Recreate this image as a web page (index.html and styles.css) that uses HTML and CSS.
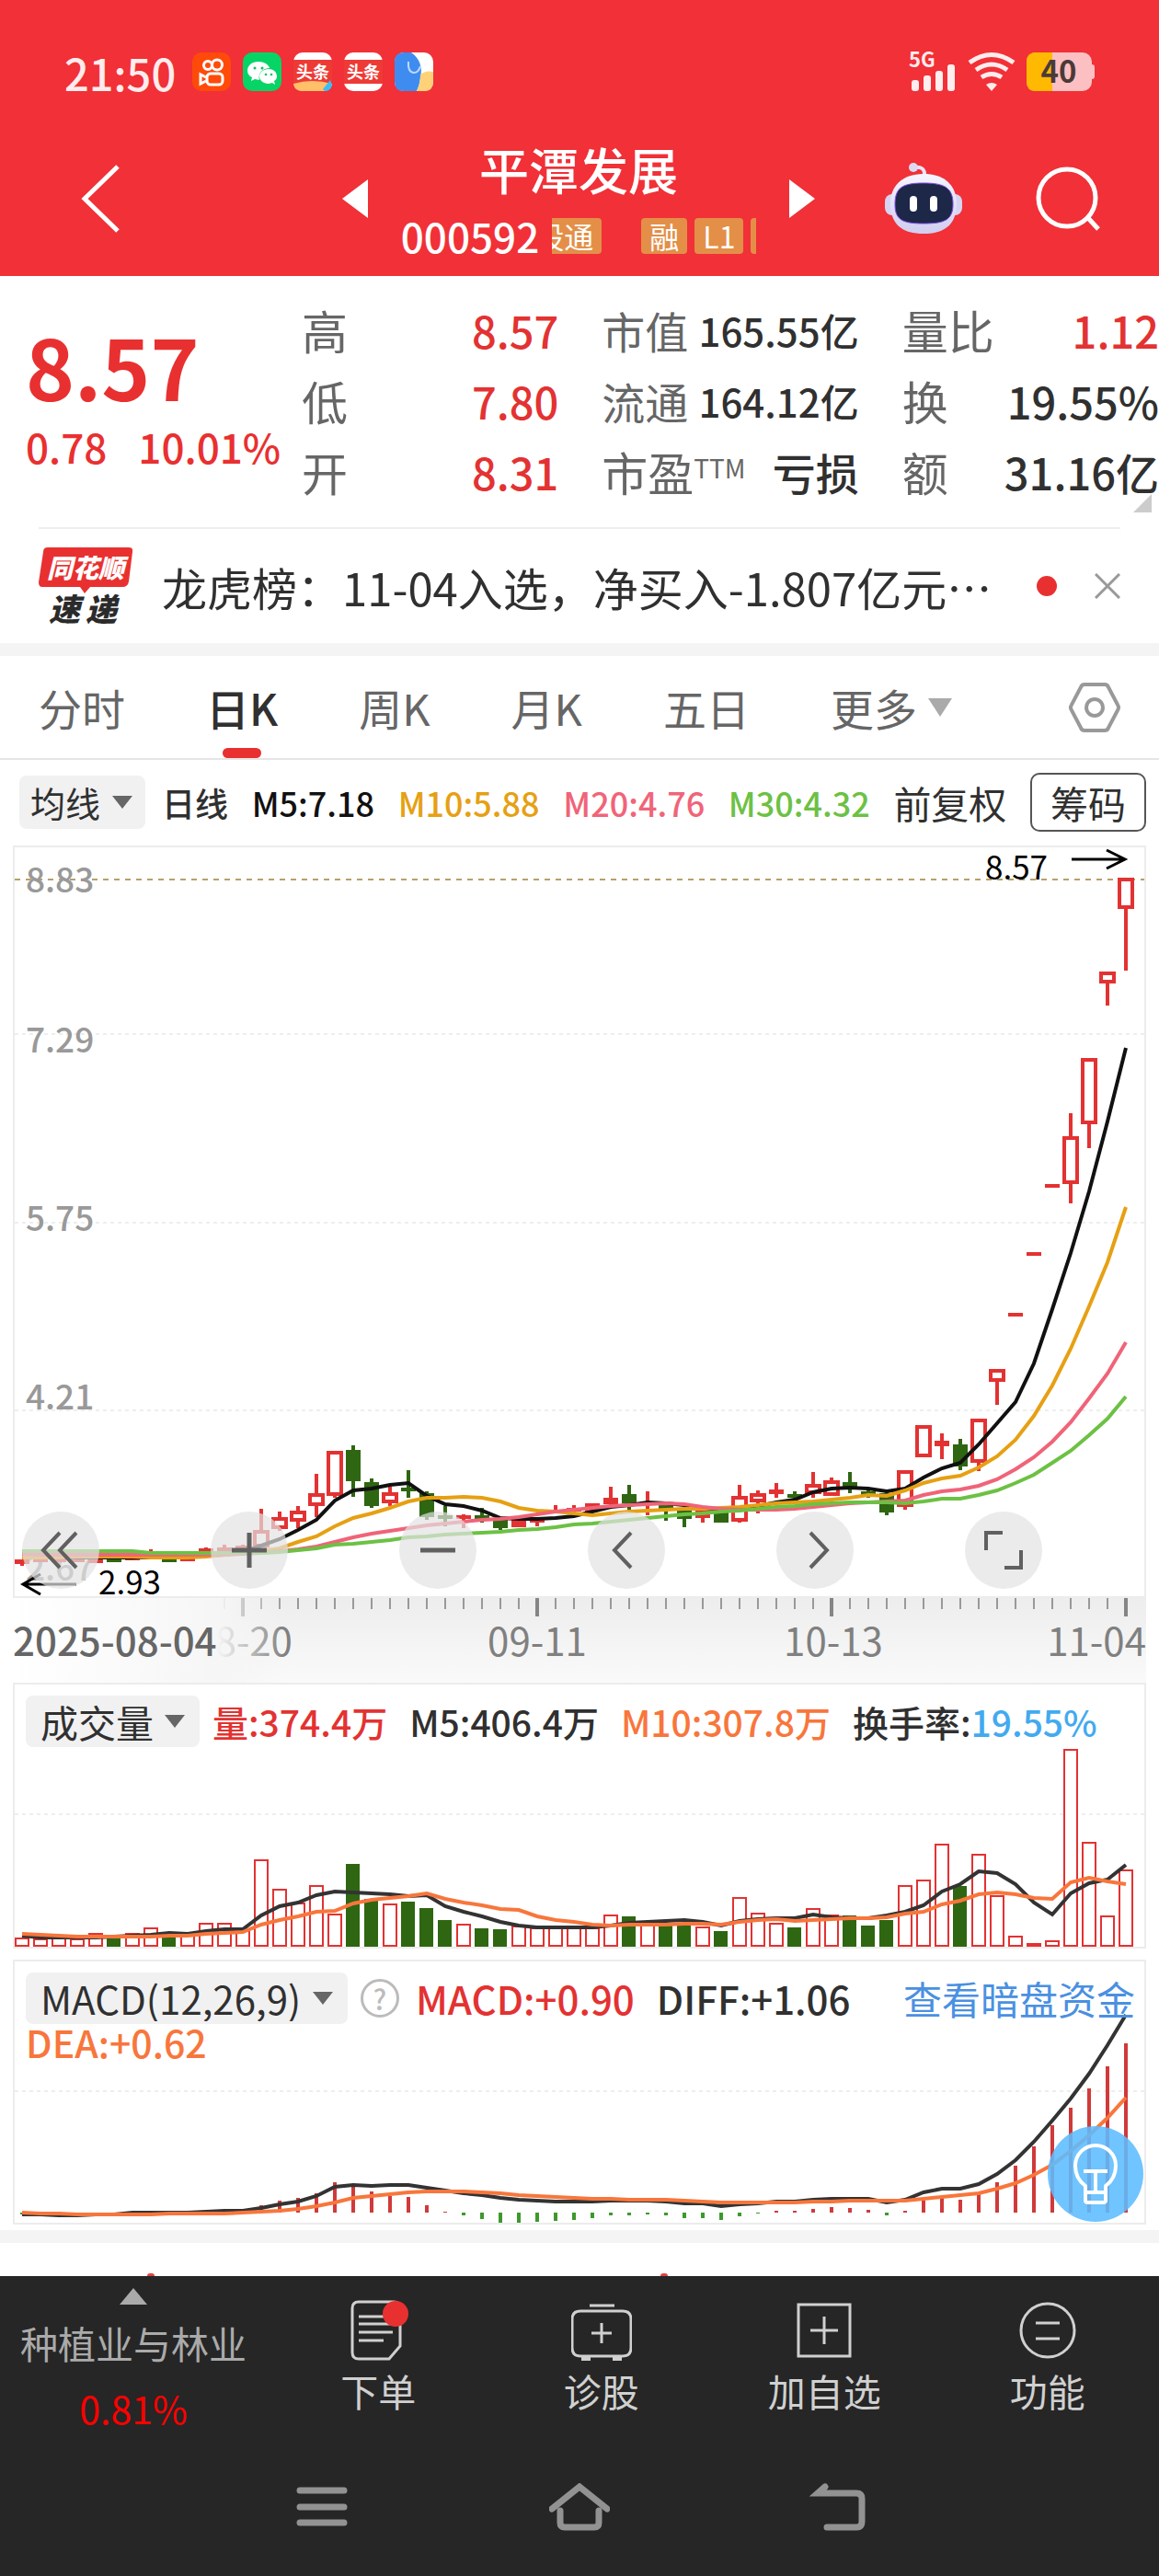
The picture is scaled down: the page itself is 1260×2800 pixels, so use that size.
FILE: index.html
```html
<!DOCTYPE html>
<html lang="zh-CN">
<head>
  <meta charset="UTF-8">
  <meta name="viewport" content="width=device-width, initial-scale=1.0">
  <title>平潭发展 000592</title>
  <link rel="stylesheet" href="styles.css">
</head>
<body>
<div class="page">
  <!-- 顶部 -->
  <header class="header">
    <div class="status">
      <span class="clock">21:50</span>
      <div class="apps">
        <svg viewBox="0 0 42 42" class="app">
          <rect width="42" height="42" rx="10" fill="#ff4a0a"/>
          <g fill="none" stroke="#fff" stroke-width="3">
            <circle cx="17" cy="14" r="4.5"/><circle cx="27" cy="13.500" r="5.500"/>
            <rect x="16" y="23" width="17" height="12" rx="4"/><path d="M15 27l-6-3v10l6-3"/>
          </g>
        </svg>
        <svg viewBox="0 0 42 42" class="app">
          <rect width="42" height="42" rx="10" fill="#06d466"/>
          <path fill="#fff" d="M17 10c-7 0-12 4-12 10 0 3 2 6 5 7l-1 4 4-2 5 1c-2-8 4-13 11-13-1-4-6-7-12-7z"/>
          <path fill="#fff" d="M28 18c-6 0-10 4-10 8s4 8 10 8l4-1 3 2-1-4c2-1 3-3 3-5 0-5-4-8-9-8z"/>
          <g fill="#06c460"><circle cx="13" cy="17" r="1.500"/><circle cx="21" cy="17" r="1.500"/><circle cx="25" cy="24" r="1.300"/><circle cx="31" cy="24" r="1.300"/></g>
        </svg>
        <svg viewBox="0 0 42 42" class="app">
          <rect width="42" height="42" rx="10" fill="#fff"/>
          <rect y="8" width="42" height="26" fill="#ee3a35"/>
          <path d="M0 34q20-6 42 0q-1 8-10 8H10q-9 0-10-8z" fill="#ffc069"/>
          <path d="M32 40l8-10 2 6q-2 6-8 6z" fill="#38bdf8"/>
          <text x="21" y="28" font-size="18" font-weight="700" fill="#fff" text-anchor="middle">头条</text>
        </svg>
        <svg viewBox="0 0 42 42" class="app">
          <rect width="42" height="42" rx="10" fill="#fff"/>
          <rect y="8" width="42" height="26" fill="#ee3a35"/>
          <text x="21" y="28" font-size="18" font-weight="700" fill="#fff" text-anchor="middle">头条</text>
        </svg>
        <svg viewBox="0 0 42 42" class="app">
          <rect width="42" height="42" rx="10" fill="#fff"/>
          <path d="M10 0h8q14 10 10 28q-1 8-4 14H10Q0 42 0 32V10Q0 0 10 0z" fill="#3f8cf0"/>
          <path d="M28 24q6-5 14-3v11q0 10-10 10h-8q4-8 4-18z" fill="#ffd27a"/>
          <path d="M15 10v5q1 7 6 7t7-7" fill="none" stroke="#bcd8ff" stroke-width="2"/>
        </svg>
      </div>
      <div class="signals">
        <svg viewBox="0 0 52 42" class="signal">
          <text x="0" y="16" font-size="22" font-weight="700" fill="#ffeced">5G</text>
          <g fill="#ffeced"><rect x="3" y="30" width="8" height="12" rx="3"/><rect x="16" y="25" width="8" height="17" rx="3"/><rect x="29" y="20" width="8" height="22" rx="3"/><rect x="42" y="13" width="8" height="29" rx="3"/></g>
        </svg>
        <svg viewBox="0 0 52 42" class="signal">
          <g fill="none" stroke="#ffeced" stroke-width="5"><path d="M2 11q24-17 48 0"/><path d="M9 19q17-12 34 0"/><path d="M15 27q11-7 22 0"/></g>
          <path d="M20 35q6-4 12 0l-6 7z" fill="#ffeced"/>
        </svg>
        <svg viewBox="0 0 74 42" class="battery">
          <rect width="71" height="42" rx="10" fill="#fcc0c2"/><rect x="68" y="13" width="6" height="16" rx="3" fill="#fcc0c2"/>
          <path d="M10 0h18v42H10Q0 42 0 32V10Q0 0 10 0z" fill="#ffb900"/>
          <text x="35" y="33" font-size="33" font-weight="700" fill="#4c3a38" text-anchor="middle">40</text>
        </svg>
      </div>
    </div>
    <nav class="titlebar">
      <a href="#" class="back" aria-label="返回"><svg viewBox="0 0 44 76" width="44" height="76"><path d="M40 3L4 38l36 35" fill="none" stroke="#fff" stroke-width="5"/></svg></a>
      <div class="stock">
        <button class="plain" aria-label="上一只"><svg viewBox="0 0 28 42" width="28" height="42"><path d="M28 0v42L0 21z" fill="#fff"/></svg></button>
        <div class="stock-name">
          <h1>平潭发展</h1>
          <div class="stock-code">
            <span>000592</span>
            <div class="tags"><span class="tag tag-cut">股通</span><span class="tag">融</span><span class="tag">L1</span><span class="tag tag-next"></span></div>
          </div>
        </div>
        <button class="plain" aria-label="下一只"><svg viewBox="0 0 28 42" width="28" height="42"><path d="M0 0v42l28-21z" fill="#fff"/></svg></button>
      </div>
      <div class="actions">
        <button class="plain" aria-label="智能助手">
          <svg viewBox="0 0 84 78" width="84" height="78">
            <defs><linearGradient id="shell" x2="0" y2="1"><stop offset="0" stop-color="#f6f5ff"/><stop offset="1" stop-color="#d0cdf0"/></linearGradient></defs>
            <path d="M31 5q13-2 12 9" fill="none" stroke="#e6e4f8" stroke-width="4"/><circle cx="31" cy="5" r="5" fill="#dcd9f4"/>
            <rect x="0" y="34" width="84" height="23" rx="8" fill="#d6d4f2"/>
            <path d="M42 12c24 0 36 14 36 32 0 24-14 33-36 33S6 68 6 44c0-18 12-32 36-32z" fill="url(#shell)"/>
            <path d="M42 22c23 0 32 5 32 23 0 17-9 21-32 21s-31-4-31-21c0-18 8-23 31-23z" fill="#1d2747" stroke="#7b4be0" stroke-width="1"/>
            <rect x="27" y="36" width="8" height="17" rx="4" fill="#fff"/><rect x="49" y="36" width="8" height="17" rx="4" fill="#fff"/>
          </svg>
        </button>
        <button class="plain" aria-label="搜索"><svg viewBox="0 0 70 70" width="70" height="70"><g fill="none" stroke="#fff" stroke-width="5"><circle cx="34" cy="34" r="31"/><path d="M56 55l12 13"/></g></svg></button>
      </div>
    </nav>
  </header>

  <!-- 行情 -->
  <section class="quote">
    <div class="price">
      <strong>8.57</strong>
      <div class="change"><span>0.78</span><span>10.01%</span></div>
    </div>
    <dl class="figures">
      <div><dt>高</dt><dd class="up">8.57</dd></div>
      <div class="narrow"><dt>市值</dt><dd>165.55亿</dd></div>
      <div><dt>量比</dt><dd class="up">1.12</dd></div>
      <div><dt>低</dt><dd class="up">7.80</dd></div>
      <div class="narrow"><dt>流通</dt><dd>164.12亿</dd></div>
      <div><dt>换</dt><dd>19.55%</dd></div>
      <div><dt>开</dt><dd class="up">8.31</dd></div>
      <div><dt>市盈<small>TTM</small></dt><dd>亏损</dd></div>
      <div><dt>额</dt><dd>31.16亿</dd></div>
    </dl>
    <span class="corner"></span>
  </section>

  <!-- 速递 -->
  <section class="news">
    <svg viewBox="0 0 102 84" class="news-logo">
      <path d="M10 0h88q5 0 4 5l-4 32q-1 6-7 6H56l-6 7-5-7H4q-4 0-4-5L5 5q0-5 5-5z" fill="#e93030"/>
      <text x="51" y="33" font-size="28" font-weight="900" font-style="italic" fill="#fff" text-anchor="middle">同花顺</text>
      <text x="11" y="80" font-size="34" font-weight="900" font-style="italic" fill="#2b2b2b">速</text>
      <text x="51" y="80" font-size="34" font-weight="900" font-style="italic" fill="#2b2b2b">递</text>
    </svg>
    <a href="#">龙虎榜：11-04入选，净买入-1.807亿元…</a>
    <span class="dot"></span>
    <button class="plain" aria-label="关闭"><svg viewBox="0 0 28 28" width="28" height="28"><path d="M1 1l26 26M27 1L1 27" stroke="#999" stroke-width="3"/></svg></button>
  </section>
  <div class="band"></div>

  <!-- 周期切换 -->
  <nav class="tabs">
    <button>分时</button>
    <button class="active">日K</button>
    <button>周K</button>
    <button>月K</button>
    <button>五日</button>
    <button class="more">更多<span class="tri tri-light"></span></button>
    <button class="gear" aria-label="设置"><svg viewBox="0 0 56 54" width="56" height="54"><g fill="none" stroke="#999" stroke-width="4"><path d="M17 2h22q3 0 4 3l10 19q2 3 0 6L43 49q-1 3-4 3H17q-3 0-4-3L3 30q-2-3 0-6L13 5q1-3 4-3z"/><circle cx="28" cy="27" r="9"/></g></svg></button>
  </nav>

  <div class="legend">
    <div class="legend-type">
      <label class="picker"><select aria-label="指标"><option>均线</option></select><span class="tri"></span></label>
      <span>日线</span>
    </div>
    <span class="m5">M5:7.18</span>
    <span class="m10">M10:5.88</span>
    <span class="m20">M20:4.76</span>
    <span class="m30">M30:4.32</span>
    <span class="adjust">前复权</span>
    <button class="chips">筹码</button>
  </div>

  <main class="charts">
    <!-- K线图 -->
    <section class="panel">
      <svg viewBox="16 2 1228 814" class="plot">
        <g class="grid"><path d="M16 205H1244M16 410H1244M16 614H1244"/><path class="top-line" d="M16 37H1244"/></g>
        <g class="scale"><text x="28" y="51">8.83</text><text x="28" y="225">7.29</text><text x="28" y="419">5.75</text><text x="28" y="613">4.21</text><text x="28" y="799">2.67</text></g>
        <g id="candles"></g>
        <g class="marks">
          <text x="1071" y="37">8.57</text><path d="M1165 15h58M1203 5l20 10-20 10"/>
          <text x="107" y="814">2.93</text><path d="M83 803H25M44 792l-19 11 19 11"/>
        </g>
      </svg>
      <div class="tools">
        <button aria-label="最早"><svg viewBox="0 0 40 40"><path d="M19 1L1 20l18 19M37 1L19 20l18 19"/></svg></button>
        <button aria-label="放大"><svg viewBox="0 0 40 40"><path class="thick" d="M1 20h38M20 1v38"/></svg></button>
        <button aria-label="缩小"><svg viewBox="0 0 40 40"><path class="thick" d="M1 20h38"/></svg></button>
        <button aria-label="左移"><svg viewBox="0 0 40 40"><path d="M25 1L7 20l18 19"/></svg></button>
        <button aria-label="右移"><svg viewBox="0 0 40 40"><path d="M15 1l18 19-18 19"/></svg></button>
        <button aria-label="全屏"><svg viewBox="0 0 40 40"><path d="M1 20V1h18M39 20v19H21"/></svg></button>
      </div>
    </section>
    <svg viewBox="14 0 1232 92" class="plot">
      <defs>
        <linearGradient id="shade" x2="0" y2="1"><stop offset="0" stop-color="#ededed"/><stop offset="1" stop-color="#fafafa"/></linearGradient>
        <linearGradient id="fade"><stop offset="0" stop-color="#fff"/><stop offset="0.75" stop-color="#f6f6f6"/><stop offset="1" stop-color="#f4f4f4" stop-opacity="0"/></linearGradient>
      </defs>
      <rect x="14" width="1232" height="92" fill="url(#shade)"/>
      <g id="ticks"></g>
      <g class="dates"><text x="264" y="63">08-20</text><text x="584" y="63">09-11</text><text x="906" y="63">10-13</text></g>
      <rect x="14" width="296" height="92" fill="url(#fade)"/>
      <g class="dates"><text x="1246" y="63" class="end">11-04</text><text x="14" y="63" class="start">2025-08-04</text></g>
    </svg>

    <!-- 成交量 -->
    <section class="panel volume">
      <div class="panel-head">
        <label class="picker"><select aria-label="副图指标"><option>成交量</option></select><span class="tri"></span></label>
        <span class="up">量:374.4万</span>
        <span>M5:406.4万</span>
        <span class="orange">M10:307.8万</span>
        <span>换手率:<span class="blue">19.55%</span></span>
      </div>
      <svg viewBox="16 0 1228 217" class="plot">
        <path class="grid" d="M16 73H1244"/>
        <g id="volume"></g>
      </svg>
    </section>

    <!-- MACD -->
    <section class="panel macd">
      <svg viewBox="16 0 1228 284" class="plot">
        <path class="grid" d="M16 141H1244"/>
        <g id="macd"></g>
      </svg>
      <div class="panel-over">
        <div class="panel-head">
          <label class="picker"><select aria-label="副图指标"><option>MACD(12,26,9)</option></select><span class="tri"></span></label>
          <button class="help" aria-label="说明">?</button>
          <span class="up">MACD:+0.90</span>
          <span>DIFF:+1.06</span>
          <a href="#">查看暗盘资金</a>
        </div>
        <span class="orange dea">DEA:+0.62</span>
      </div>
      <button class="bulb" aria-label="提示"><svg viewBox="0 0 48 66" width="48" height="66"><g fill="none" stroke="#fff" stroke-width="4"><path d="M13 62V46Q2 38 2 24a22 22 0 0 1 44 0q0 14-11 22v16q0 2-3 2H16q-3 0-3-2zM13 53h22M11 30h26M24 30v23"/></g></svg></button>
    </section>
  </main>
  <div class="band"></div>
  <div class="peek"><i></i><i></i></div>

  <!-- 底部 -->
  <footer class="footer">
    <div class="bottom-nav">
      <a href="#" class="sector"><span class="tri tri-up"></span><span>种植业与林业</span><b>0.81%</b></a>
      <a href="#"><svg viewBox="0 0 66 66"><path d="M12 2h38q7 0 7 7v41L45 64H12q-7 0-7-7V9q0-7 7-7zM12 18h27M12 26h37M12 35h37M12 44h27"/><circle cx="52" cy="15" r="14" class="badge"/></svg>下单</a>
      <a href="#"><svg viewBox="0 0 66 66"><path d="M20 6h27M10 12h46q9 0 9 9v31q0 9-9 9H10q-9 0-9-9V21q0-9 9-9zM22 36h22M33 25v22"/><path d="M11 64h10M45 64h10" stroke-width="6"/></svg>诊股</a>
      <a href="#"><svg viewBox="0 0 66 66"><path d="M5 5h56v56H5zM18 33h30M33 18v30"/></svg>加自选</a>
      <a href="#"><svg viewBox="0 0 66 66"><circle cx="33" cy="33" r="29"/><path d="M20 25h26M20 42h26"/></svg>功能</a>
    </div>
    <div class="system-nav">
      <button class="plain" aria-label="最近任务"><svg viewBox="0 0 66 52" width="66" height="52"><path d="M9 8h48M9 26h48M9 43h48"/></svg></button>
      <button class="plain" aria-label="主屏幕"><svg viewBox="0 0 66 52" width="66" height="52"><path d="M3 28L33 4l30 24M12 30v13q0 5 5 5h32q5 0 5-5V30"/></svg></button>
      <button class="plain" aria-label="后退"><svg viewBox="0 0 66 52" width="66" height="52"><path d="M20 4l-8 7h42q6 0 6 6v25q0 6-6 6H22"/></svg></button>
    </div>
  </footer>
</div>
<script src="chart.js"></script>
</body>
</html>
```
FILE: styles.css
```css
* {
  box-sizing: border-box;
}

body {
  margin: 0;
  background: #fff;
  color: #303030;
  font-family: "Noto Sans CJK SC", "Noto Sans", sans-serif;
  font-weight: 500;
}

button, select {
  margin: 0;
  padding: 0;
  border: 0;
  background: none;
  color: inherit;
  font: inherit;
}

a {
  color: inherit;
  text-decoration: none;
}

svg {
  display: block;
}

.page {
  display: flex;
  flex-direction: column;
  min-height: 100vh;
}

.plain {
  display: block;
}

.up { color: #e33232; }
.orange { color: #f8763c; }
.blue { color: #42aaf0; }

/* 顶部 */
.header {
  background: #f13037;
  color: #fff;
}

.status {
  display: flex;
  align-items: center;
  height: 144px;
  padding: 12px 70px 0;
}

.clock {
  font-size: 47px;
  color: #ffeced;
}

.apps {
  display: flex;
  gap: 13px;
  margin-left: 18px;
}

.app {
  width: 42px;
  height: 42px;
}

.signals {
  display: flex;
  gap: 12px;
  margin-left: auto;
}

.signal {
  width: 52px;
  height: 42px;
  overflow: visible;
}

.battery {
  width: 74px;
  height: 42px;
}

.titlebar {
  display: grid;
  grid-template-columns: 1fr auto 1fr;
  align-items: center;
  height: 156px;
  padding: 0 64px 12px 88px;
}

.stock {
  display: flex;
  align-items: center;
  gap: 36px;
  margin-right: 26px;
}

.stock h1 {
  margin: 0;
  font-size: 54px;
  font-weight: 500;
  line-height: 80px;
  text-align: center;
}

.stock-code {
  display: flex;
  align-items: center;
  gap: 14px;
  font-size: 44px;
  line-height: 64px;
}

.tags {
  display: flex;
  width: 222px;
  overflow: hidden;
  font-size: 32px;
  font-weight: 400;
  line-height: 39px;
}

.tag {
  flex: none;
  height: 39px;
  margin-right: 8px;
  padding: 0 9px;
  border-radius: 4px;
  background: #e38f48;
}

.tag-cut {
  margin-left: -28px;
  margin-right: 43px;
}

.actions {
  display: flex;
  justify-content: flex-end;
  align-items: center;
  gap: 80px;
}

/* 行情 */
.quote {
  position: relative;
  display: grid;
  grid-template-columns: 300px 1fr;
  margin-left: 28px;
  height: 273px;
}

.price {
  padding-top: 45px;
  color: #e93030;
}

.price strong {
  display: block;
  font-size: 90px;
  font-weight: 700;
  line-height: 104px;
}

.change {
  display: flex;
  gap: 34px;
  font-size: 44px;
  line-height: 72px;
}

.figures {
  display: grid;
  grid-template-columns: repeat(3, 1fr);
  grid-auto-rows: 77px;
  column-gap: 47px;
  margin: 0;
  padding-top: 20px;
  font-size: 50px;
  line-height: 77px;
}

.figures div {
  display: flex;
  justify-content: space-between;
  white-space: nowrap;
}

.figures .narrow {
  font-size: 47px;
}

.figures dt {
  color: #666;
  font-weight: 400;
}

.figures dd {
  margin: 0;
  font-size: 47px;
}

.figures .narrow dd {
  font-size: 42px;
}

.figures small {
  font-size: 28px;
  vertical-align: 14px;
  line-height: 28px;
}

.corner {
  position: absolute;
  right: 8px;
  bottom: 16px;
  border-bottom: 20px solid #ccc;
  border-left: 20px solid transparent;
}

/* 速递 */
.news {
  display: flex;
  align-items: center;
  margin: 0 42px;
  height: 126px;
  border-top: 2px solid #eee;
  font-size: 49px;
  font-weight: 400;
}

.news-logo {
  flex: none;
  width: 102px;
  height: 84px;
}

.news a {
  margin-left: 32px;
  white-space: nowrap;
}

.dot {
  width: 22px;
  height: 22px;
  margin-left: auto;
  margin-right: 41px;
  border-radius: 50%;
  background: #e93030;
}

.band {
  height: 14px;
  background: #f4f4f4;
}

/* 周期切换 */
.tabs {
  display: flex;
  align-items: center;
  gap: 88px;
  height: 113px;
  padding: 0 42px;
  border-bottom: 2px solid #e6e6e6;
  color: #666;
  font-size: 47px;
  font-weight: 400;
}

.tabs button {
  position: relative;
  height: 111px;
  line-height: 111px;
}

.tabs .active {
  color: #303030;
  font-weight: 500;
}

.active::after {
  content: "";
  position: absolute;
  left: 50%;
  bottom: 0;
  width: 42px;
  height: 11px;
  margin-left: -21px;
  border-radius: 6px;
  background: #e93030;
}

.more {
  display: flex;
  align-items: center;
  gap: 12px;
}

.tabs .gear {
  display: flex;
  align-items: center;
  margin-left: auto;
}

.tri {
  border: 11px solid transparent;
  border-top: 14px solid #666;
  border-bottom: 0;
}

.tri-light {
  border-width: 20px 13px 0;
  border-top-color: #aaa;
}

.tri-up {
  border: 15px solid transparent;
  border-top: 0;
  border-bottom: 18px solid #aaa;
}

/* 均线指标 */
.legend {
  display: flex;
  align-items: center;
  justify-content: space-between;
  padding: 14px 14px 15px 21px;
  font-size: 36px;
  white-space: nowrap;
}

.legend-type {
  display: flex;
  align-items: center;
  gap: 18px;
}

.picker {
  display: flex;
  align-items: center;
  gap: 12px;
  height: 58px;
  padding: 0 14px 0 12px;
  border-radius: 8px;
  background: #f1f1f1;
  font-size: 38px;
  font-weight: 400;
}

.picker select {
  appearance: none;
  overflow: visible;
  height: 58px;
  line-height: 50px;
}

.m5 { color: #111; }
.m10 { color: #e6a013; }
.m20 { color: #f06478; }
.m30 { color: #6cc144; }

.adjust {
  font-size: 41px;
  font-weight: 400;
}

.chips {
  height: 64px;
  padding: 0 20px;
  border: 2px solid #555;
  border-radius: 10px;
  font-size: 41px;
  font-weight: 400;
}

/* 图表 */
.charts {
  padding: 0 14px 6px;
}

.panel {
  position: relative;
  border: 2px solid #ececec;
}

.plot {
  width: 100%;
}

.grid {
  fill: none;
  stroke: #ddd;
  stroke-width: 1;
  stroke-dasharray: 4 4;
}

.top-line {
  stroke: #b8a06c;
  stroke-width: 2;
  stroke-dasharray: 6 6;
}

.scale {
  font-size: 37px;
  fill: #999;
}

.marks {
  font-size: 35px;
  font-weight: 400;
  fill: #000;
}

.marks path {
  fill: none;
  stroke: #000;
  stroke-width: 3;
}

.dates {
  font-size: 42px;
  font-weight: 400;
  fill: #808080;
  text-anchor: middle;
}

.dates .end {
  text-anchor: end;
}

.dates .start {
  text-anchor: start;
  font-weight: 500;
  fill: #666;
}

.tools {
  position: absolute;
  left: 8px;
  bottom: 8px;
  display: flex;
  gap: 121px;
}

.tools button {
  display: flex;
  align-items: center;
  justify-content: center;
  width: 84px;
  height: 84px;
  border-radius: 50%;
  background: rgba(226, 226, 226, 0.7);
}

.tools svg {
  width: 40px;
  height: 40px;
  overflow: visible;
}

.tools path {
  fill: none;
  stroke: #606060;
  stroke-width: 4;
}

.tools .thick {
  stroke-width: 5;
}

/* 副图 */
.panel-head {
  display: flex;
  align-items: center;
  gap: 24px;
  height: 56px;
  font-size: 39px;
  white-space: nowrap;
}

.panel-head .picker {
  height: 56px;
  margin-right: -10px;
  padding: 0 16px 0 16px;
  font-size: 41px;
}

.volume {
  padding-top: 12px;
}

.volume .panel-head {
  margin-left: 12px;
}

.macd {
  margin-top: 12px;
}

.macd .panel-head,
.macd .picker {
  font-size: 42px;
}

.macd .panel-head a {
  margin-left: auto;
  color: #4a90e2;
  font-weight: 400;
}

.panel-over {
  position: absolute;
  top: 12px;
  left: 12px;
  right: 10px;
  line-height: 38px;
}

.help {
  width: 42px;
  height: 42px;
  margin-right: -6px;
  border: 3px solid #bbb;
  border-radius: 50%;
  color: #bbb;
  font-size: 30px;
  line-height: 34px;
}

.dea {
  font-size: 41px;
}

.bulb {
  position: absolute;
  right: 1px;
  bottom: 1px;
  display: flex;
  align-items: center;
  justify-content: center;
  width: 104px;
  height: 104px;
  border-radius: 50%;
  background: rgba(92, 188, 255, 0.88);
}

.peek {
  display: flex;
  justify-content: space-between;
  align-items: flex-end;
  height: 36px;
  padding: 0 534px 0 160px;
}

.peek i {
  width: 8px;
  height: 3px;
  border-radius: 4px 4px 0 0;
  background: #d44;
}

/* 底部 */
.footer {
  flex: 1;
  background: #262626;
  color: #d0d0d0;
}

.bottom-nav {
  display: grid;
  grid-template-columns: 290px repeat(4, 1fr);
  height: 200px;
}

.bottom-nav a {
  display: flex;
  flex-direction: column;
  align-items: center;
  gap: 2px;
  padding-top: 26px;
  font-size: 41px;
  font-weight: 400;
  line-height: 60px;
}

.bottom-nav svg {
  width: 66px;
  height: 66px;
  fill: none;
  stroke: #d0d0d0;
  stroke-width: 3;
}

.bottom-nav .badge {
  fill: #e93030;
  stroke: none;
}

.bottom-nav .sector {
  gap: 11px;
  padding-top: 13px;
  color: #aaa;
}

.sector b {
  color: #f00;
  font-weight: 400;
}

.system-nav {
  display: flex;
  justify-content: center;
  gap: 214px;
  padding-top: 25px;
}

.system-nav svg {
  fill: none;
  stroke: #929292;
  stroke-width: 7;
  stroke-linecap: round;
}
```
FILE: chart.js
```js
// 第 i 根K线的横坐标
const x = i => 24 + i * 20;
const RED = '#e33232', GREEN = '#2f6612';

// [颜色, 最高, 实体上, 实体下, 最低]
const candles = [
  ['r',776,776,781,783],['r',775,775,778,778],['r',775,775,778,778],['r',775,775,778,778],['r',776,776,779,779],
  ['g',774,775,776,777],['r',772,773,775,775],['r',765,770,773,773],['g',774,775,777,778],
  ['r',774,774,778,778],['r',763,764,767,768],['r',760,763,767,767],['r',760,761,764,764],['r',721,744,763,763],
  ['r',724,730,743,745],['r',718,723,735,742],['r',683,704,718,730],['r',658,658,707,709],['g',652,657,691,708],
  ['g',688,692,718,720],['r',697,703,715,718],['g',679,698,701,709],['g',702,704,730,733],['g',718,728,732,740],
  ['r',727,728,731,742],['g',720,728,732,736],['g',732,732,742,744],['r',732,733,741,741],['r',730,732,735,740],
  ['r',717,722,725,725],['r',717,720,724,725],['r',715,715,724,724],['r',697,709,716,717],['g',695,705,715,722],
  ['r',702,713,715,728],['g',716,717,720,734],['g',722,723,732,741],['r',723,723,731,736],['g',725,725,736,736],
  ['r',695,707,735,736],['r',701,704,714,726],['r',693,700,705,709],['g',702,705,709,714],['r',681,694,705,709],
  ['r',687,690,707,707],['g',681,692,697,704],['g',700,702,704,709],['g',702,704,725,728],['r',679,679,719,722],
  ['r',630,630,665,665],['r',639,647,653,667],['g',645,651,675,679],['r',623,623,671,680],['r',569,569,583,608],
  ['r',508,508,511,511],['r',442,442,446,446],['r',368,368,372,372],['r',291,316,368,389],['r',231,231,303,329],
  ['r',137,137,150,174],['r',35,35,69,136]
];

const ma5 = [773,774,774,774,774,774,774,774,774,773,772,771,768,761,754,744,733,712,701,699,695,693,707,716,718,723,731,732,732,731,729,724,719,717,714,715,717,720,723,721,718,714,711,703,699,698,699,702,699,687,677,671,651,628,605,563,504,443,376,300,220];
const ma10 = [774,774,774,773,773,773,773,774,774,774,773,771,769,767,764,757,751,740,731,726,720,713,709,709,708,709,713,720,723,724,726,728,726,724,723,722,721,721,720,719,717,715,714,713,711,709,706,707,701,693,688,685,676,664,646,620,587,547,501,453,393];
const ma20 = [770,771,771,771,771,771,771,771,771,771,771,771,770,769,767,765,762,757,752,748,745,742,739,737,735,733,732,730,727,724,722,720,718,717,716,715,716,719,721,722,722,722,721,719,717,715,714,713,712,706,702,700,696,689,678,665,648,627,601,574,540];
const ma30 = [767,767,767,767,767,767,767,769,769,769,769,769,769,769,768,766,764,760,759,757,755,752,751,749,748,747,746,744,743,741,738,737,735,733,731,729,727,726,724,723,721,719,718,716,715,714,714,714,715,713,710,710,706,701,693,684,671,658,641,623,599];

// 成交量柱高, 负数为绿柱
const vols = [8,7,8,7,13,-10,13,19,-11,11,24,24,16,93,61,46,65,34,-90,-52,45,-49,-42,-29,23,-20,-19,21,19,20,19,19,33,-33,23,-23,-23,20,-17,52,35,24,-21,40,33,-34,-23,-29,65,71,110,-66,99,54,10,2,5,213,112,32,82];
const vol5 = [12,10,10,10,10,11,12,13,15,14,17,19,19,34,44,48,56,60,59,58,57,55,56,44,38,33,27,23,21,21,21,21,23,26,27,28,29,27,23,28,30,31,31,35,32,31,31,34,38,45,60,68,82,80,68,48,35,58,69,73,89];
const vol10 = [14,13,12,11,11,11,11,11,12,12,14,15,16,24,29,33,38,39,47,51,53,55,58,52,48,45,41,40,33,29,27,24,23,24,24,24,25,25,24,27,29,30,28,29,30,31,31,32,36,38,46,50,57,59,57,53,52,70,75,71,68];

const bars = [-2,0,0,0,0,0,1,1,1,0,0,3,2,8,13,16,21,33,29,23,18,17,8,1,-3,-7,-11,-11,-10,-9,-8,-6,-3,-3,-2,-3,-6,-6,-8,-4,-1,2,2,4,6,5,3,-3,2,13,16,14,20,33,51,72,95,114,135,159,184];
const diff = [-2,-2,-3,-3,-2,-2,0,0,0,0,1,2,2,5,9,12,18,28,30,29,30,30,27,24,21,19,16,14,13,12,12,12,13,13,13,12,10,10,7,9,10,12,12,14,15,15,15,11,14,22,26,26,31,42,57,77,100,124,151,182,215];
const dea = [0,-1,-1,-2,-2,-2,-2,-2,-1,-1,-1,-1,0,1,2,4,7,11,16,18,20,22,23,23,23,22,21,19,18,17,16,15,15,14,14,14,13,12,11,11,11,11,11,12,12,13,13,13,13,15,17,19,21,26,32,41,52,67,84,103,125];

function line(values, color, base, width) {
  const points = values.map((v, i) => x(i) + ',' + (base === null ? v : base - v)).join(' ');
  return `<polyline points="${points}" fill="none" stroke="${color}" stroke-width="${width}"/>`;
}

function rect(left, top, w, h, color) {
  return `<rect x="${left}" y="${top}" width="${w}" height="${h}" fill="${color}"/>`;
}

function hollow(left, top, w, h, color, stroke) {
  return `<rect x="${left}" y="${top}" width="${w}" height="${h}" fill="#fff" stroke="${color}" stroke-width="${stroke}"/>`;
}

// K线
let out = '';
candles.forEach(([type, high, top, bottom, low], i) => {
  const color = type === 'r' ? RED : GREEN;
  out += rect(x(i) - 2, high, 4, low - high, color);
  if (type === 'r' && bottom - top > 9) {
    out += hollow(x(i) - 7, top + 2, 14, bottom - top - 4, color, 4);
  } else {
    out += rect(x(i) - 8, top, 16, Math.max(4, bottom - top), color);
  }
});
out += line(ma5, '#111', null, 4) + line(ma10, '#e6a013', null, 4) + line(ma20, '#f06478', null, 4) + line(ma30, '#6cc144', null, 4);
document.getElementById('candles').innerHTML = out;

// 时间刻度
out = '';
for (let i = 10; i <= 60; i++) {
  const major = [12, 28, 44, 60].includes(i);
  out += major ? rect(x(i) - 2, 0, 4, 20, '#858585') : rect(x(i) - 1, 0, 2, 12, '#999');
}
document.getElementById('ticks').innerHTML = out;

// 成交量
out = '';
vols.forEach((v, i) => {
  out += v > 0 ? hollow(x(i) - 7, 216 - v, 14, v, RED, 2) : rect(x(i) - 8, 217 + v, 15, -v, GREEN);
});
out += line(vol5, '#333', 217, 4) + line(vol10, '#f8763c', 217, 4);
document.getElementById('volume').innerHTML = out;

// MACD
out = '';
bars.forEach((v, i) => {
  if (v > 0) out += rect(x(i) - 2, 273 - v, 4, v, '#d03a3a');
  if (v < 0) out += rect(x(i) - 2, 273, 4, -v, '#3c9a2c');
});
out += line(diff, '#333', 273, 4) + line(dea, '#f8763c', 273, 4);
document.getElementById('macd').innerHTML = out;
```
